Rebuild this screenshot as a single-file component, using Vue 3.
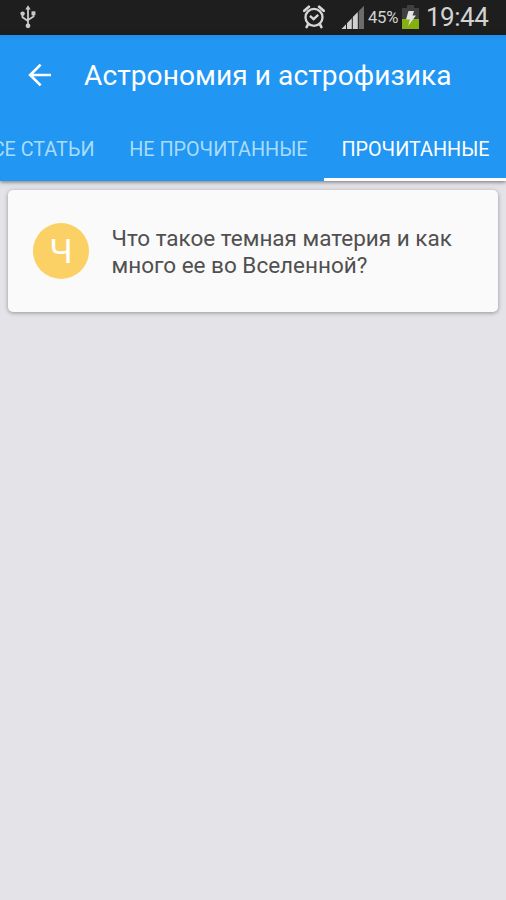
<script setup>
const tabs = [
  { label: 'ВСЕ СТАТЬИ', kind: 'first' },
  { label: 'НЕ ПРОЧИТАННЫЕ', kind: 'second' },
  { label: 'ПРОЧИТАННЫЕ', kind: 'active' },
]
</script>

<template>
  <div class="screen">
    <div class="status">
      <svg class="usb" width="16" height="24" viewBox="0 0 16 24" fill="none" stroke="#c9c9c9" stroke-width="1.8">
        <path d="M8 4V20M2.5 9V12.2L8 16M13.5 9V11.5L8 15" />
        <path d="M8 0.2L10.7 4.6H5.3Z" fill="#c9c9c9" stroke="none" />
        <circle cx="2.6" cy="8.6" r="2.2" fill="#c9c9c9" stroke="none" />
        <rect x="11.5" y="6.3" width="3.9" height="3.9" fill="#c9c9c9" stroke="none" />
        <circle cx="8" cy="20.8" r="2.4" fill="#c9c9c9" stroke="none" />
      </svg>
      <div class="right">
        <svg class="alarm" width="22" height="24" viewBox="0 0 22 24" fill="none" stroke="#d6d6d6">
          <circle cx="11" cy="12.4" r="8.5" stroke-width="2.3" />
          <path d="M1.3 5.8L5.9 1.8M20.7 5.8L16.1 1.8" stroke-width="2.7" stroke-linecap="round" />
          <path d="M5.3 18.8L3.6 22.2M16.7 18.8L18.4 22.2" stroke-width="2.6" stroke-linecap="round" />
          <path d="M7 10.8L10.6 14.2L15.2 9.8" stroke-width="2.3" />
        </svg>
        <svg class="signal" width="24" height="24" viewBox="0 0 24 24">
          <path d="M0.5 24L5 19.3V24ZM6 18.2L10.8 13.2V24H6ZM11.8 12.1L16.8 7V24H11.8Z" fill="#d0d0d0" />
          <path d="M17.8 6L23 0.8V24H17.8Z" fill="#6c6c6c" />
        </svg>
        <span class="percent">45%</span>
        <svg class="battery" width="17" height="24" viewBox="0 0 17 24">
          <path d="M5 0H12V3H17V24H0V3H5Z" fill="#404040" />
          <path d="M0 14H17V24H0Z" fill="#84b010" />
          <path d="M6.5 6H12L10.6 10.5H14L6 21L8 14.5H4Z" fill="#e4e4e4" />
        </svg>
        <span class="clock">19:44</span>
      </div>
    </div>

    <header class="appbar">
      <div class="toolbar">
        <svg class="back" width="24" height="24" viewBox="0 0 24 24" fill="none" stroke="#fff" stroke-width="2.7">
          <path d="M23 12H2M12.6 1.6L2.2 12L12.6 22.4" />
        </svg>
        <h1 class="title">Астрономия и астрофизика</h1>
      </div>
      <nav class="tabs">
        <div v-for="tab in tabs" :key="tab.label" class="tab" :class="tab.kind"><span>{{ tab.label }}</span></div>
      </nav>
    </header>

    <main class="list">
      <article class="card">
        <div class="avatar">Ч</div>
        <p class="text">Что такое темная материя и как<br />много ее во Вселенной?</p>
      </article>
    </main>
  </div>
</template>

<style>
body {
  margin: 0;
  background: #e3e3e8;
}
</style>

<style scoped>
.screen {
  width: 506px;
  height: 900px;
  overflow: hidden;
  display: flex;
  flex-direction: column;
  background: #e3e3e8;
  font-family: Roboto, sans-serif;
}
.status {
  height: 35px;
  flex: none;
  display: flex;
  justify-content: space-between;
  align-items: flex-start;
  box-sizing: border-box;
  padding: 5px 18px 0 20px;
  background: #1e1e1e;
  color: #d2d2d2;
}
.right {
  display: flex;
  align-items: flex-start;
}
.usb {
  flex: none;
}
.alarm {
  margin-right: 16px;
}
.signal {
  margin-right: 3px;
}
.percent {
  width: 30px;
  margin-right: 4px;
  font-size: 16.7px;
  line-height: 26px;
  letter-spacing: -0.3px;
  white-space: nowrap;
}
.battery {
  margin-right: 7px;
}
.clock {
  width: 62px;
  font-size: 26px;
  line-height: 24px;
  letter-spacing: -0.5px;
  white-space: nowrap;
}
.appbar {
  height: 146px;
  flex: none;
  background: linear-gradient(#218dea, #2196f3 5px);
  color: #fff;
  box-shadow: 0 1px 4px rgba(0, 0, 0, 0.5);
}
.toolbar {
  height: 79px;
  display: flex;
  align-items: center;
  padding-left: 28px;
}
.back {
  flex: none;
}
.title {
  margin: 2px 0 0 32px;
  font-size: 28.1px;
  line-height: 36px;
  font-weight: 400;
  letter-spacing: 0.07px;
  white-space: nowrap;
}
.tabs {
  height: 67px;
  display: flex;
}
.tab {
  flex: none;
  box-sizing: border-box;
  display: flex;
  justify-content: flex-end;
  border-bottom: 3px solid transparent;
  padding: 24px 16.5px 0 0;
  font-size: 19.8px;
  line-height: 24px;
  white-space: nowrap;
  color: #a9dcfb;
}
.first {
  width: 112px;
  padding-right: 17.5px;
}
.second {
  width: 212px;
}
.active {
  width: 182px;
  color: #fff;
  border-color: #fff;
}
.list {
  padding: 9px 8px;
}
.card {
  height: 122px;
  box-sizing: border-box;
  display: flex;
  align-items: center;
  padding-left: 25px;
  border-radius: 5px;
  background: #fafafa;
  box-shadow: 0 1px 4px rgba(0, 0, 0, 0.35);
}
.avatar {
  width: 56px;
  height: 56px;
  flex: none;
  border-radius: 50%;
  background: #fbd165;
  color: #fff;
  font-size: 33.7px;
  line-height: 57px;
  text-align: center;
}
.text {
  margin: 2px 0 0 22.5px;
  color: #505050;
  font-size: 22.5px;
  line-height: 27px;
  white-space: nowrap;
}
</style>
